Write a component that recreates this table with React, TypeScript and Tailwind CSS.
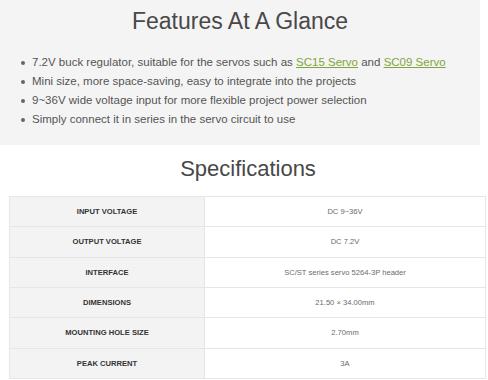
import React from 'react';

const features: React.ReactNode[] = [
  <>
    7.2V buck regulator, suitable for the servos such as{' '}
    <a href="#" className="text-[#7fa53a] underline">SC15 Servo</a> and{' '}
    <a href="#" className="text-[#7fa53a] underline">SC09 Servo</a>
  </>,
  'Mini size, more space-saving, easy to integrate into the projects',
  '9~36V wide voltage input for more flexible project power selection',
  'Simply connect it in series in the servo circuit to use',
];

const specs = [
  ['INPUT VOLTAGE', 'DC 9~36V'],
  ['OUTPUT VOLTAGE', 'DC 7.2V'],
  ['INTERFACE', 'SC/ST series servo 5264-3P header'],
  ['DIMENSIONS', '21.50 × 34.00mm'],
  ['MOUNTING HOLE SIZE', '2.70mm'],
  ['PEAK CURRENT', '3A'],
];

export default function App() {
  return (
    <div className="w-[488px] h-[380px] overflow-hidden bg-white font-['Liberation_Sans',Arial,sans-serif]">
      <section className="w-[480px] bg-[#f4f4f4] pt-[8px] pb-[16px]">
        <h2 className="text-center text-[23px] leading-[26px] text-[#484848]">Features At A Glance</h2>
        <ul className="mt-[19px] pl-[32px] text-[11.5px] leading-[19px] text-[#555]">
          {features.map((f, i) => (
            <li key={i} className="relative">
              <span className="absolute left-[-11px] top-[8px] h-[3.5px] w-[3.5px] rounded-full bg-[#666]" />
              {f}
            </li>
          ))}
        </ul>
      </section>

      <h2 className="mt-[11px] pl-[8px] text-center text-[22px] leading-[26px] text-[#484848]">Specifications</h2>

      <div className="mt-[14px] ml-[9px] w-[477px] border-t border-l border-r border-[#e6e6e6]">
        {specs.map(([k, v]) => (
          <div key={k} className="flex h-[30.33px] border-b border-[#e6e6e6]">
            <div className="flex w-[195px] items-center justify-center border-r border-[#e6e6e6] bg-[#f3f3f3] text-[7.6px] font-bold text-[#333]">
              {k}
            </div>
            <div className="flex flex-1 items-center justify-center text-[7.6px] text-[#6b6b6b]">{v}</div>
          </div>
        ))}
      </div>
    </div>
  );
}
